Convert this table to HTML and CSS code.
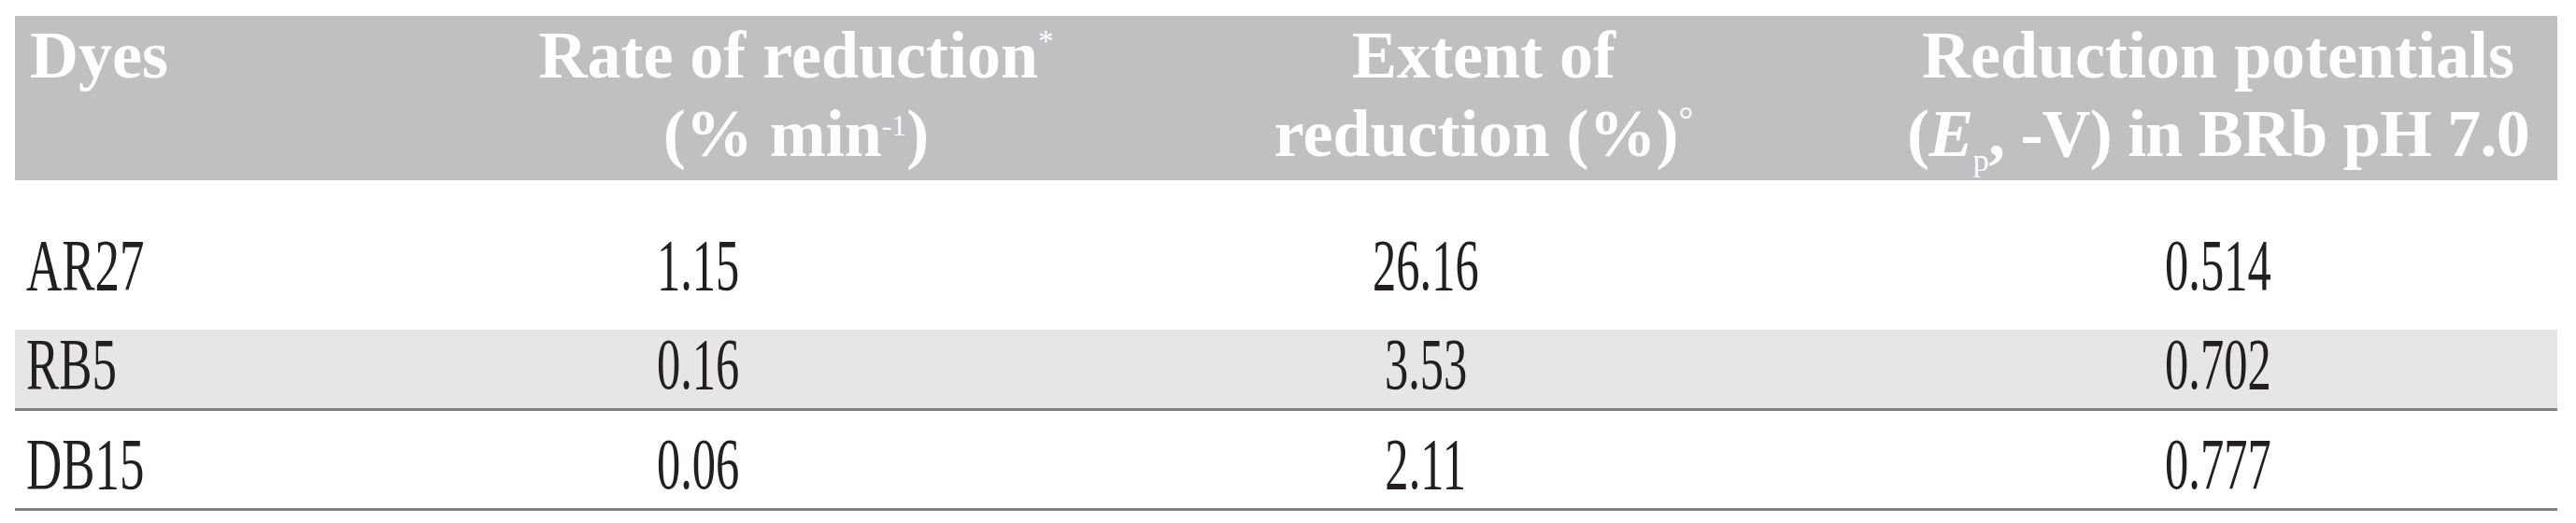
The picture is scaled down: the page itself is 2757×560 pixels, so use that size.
FILE: index.html
```html
<!DOCTYPE html>
<html lang="en">
<head>
<meta charset="utf-8">
<title>Dye reduction table</title>
<link rel="stylesheet" href="styles.css">
</head>
<body>
<div class="table">
  <div class="row head">
    <div class="cell c1">Dyes</div>
    <div class="cell c2">Rate of reduction<sup class="ast">*</sup><br>(% min<sup class="exp">-1</sup>)</div>
    <div class="cell c3">Extent of<br>reduction (%)<sup class="deg">°</sup></div>
    <div class="cell c4">Reduction potentials<br><span class="tight">(<i>E</i><sub class="sub">p</sub>, -V) in BRb pH 7.0</span></div>
  </div>
  <div class="row body first">
    <div class="cell c1"><span class="t left">AR27</span></div>
    <div class="cell c2"><span class="t num">1.15</span></div>
    <div class="cell c3"><span class="t num">26.16</span></div>
    <div class="cell c4"><span class="t num">0.514</span></div>
  </div>
  <div class="row body shade">
    <div class="cell c1"><span class="t left">RB5</span></div>
    <div class="cell c2"><span class="t num">0.16</span></div>
    <div class="cell c3"><span class="t num">3.53</span></div>
    <div class="cell c4"><span class="t num">0.702</span></div>
  </div>
  <div class="row body last">
    <div class="cell c1"><span class="t left">DB15</span></div>
    <div class="cell c2"><span class="t num">0.06</span></div>
    <div class="cell c3"><span class="t num">2.11</span></div>
    <div class="cell c4"><span class="t num">0.777</span></div>
  </div>
</div>
</body>
</html>
```

FILE: styles.css
```css
html, body {
  margin: 0;
  padding: 0;
  background: #ffffff;
}
body {
  font-family: "Liberation Serif", "Times New Roman", serif;
}
.table {
  width: 2721px;
  margin: 17px 0 0 16px;
}
.row {
  display: grid;
  grid-template-columns: 437px 588px 970px 726px;
}
.head {
  grid-template-columns: 552px 568px 904px 697px;
  background: #bfc0c2;
  color: #ffffff;
  font-weight: bold;
  font-size: 72px;
  line-height: 84px;
  padding-bottom: 8px;
  white-space: nowrap;
}
.head .cell {
  text-align: center;
}
.head .c1 {
  padding-left: 16px;
  text-align: left;
}
.head .c4 {
  padding-right: 29px;
}
.head sup, .head sub {
  line-height: 0;
  font-weight: normal;
}
.ast {
  font-size: 0.46em;
  vertical-align: 28px;
}
.exp {
  font-size: 0.44em;
  vertical-align: 22px;
}
.deg {
  font-size: 0.55em;
  vertical-align: 25px;
}
.sub {
  font-size: 0.48em;
  vertical-align: -16px;
}
.tight {
  letter-spacing: -0.8px;
}
.body {
  color: #231f20;
  font-size: 79px;
  line-height: 74px;
}
.body .cell {
  text-align: center;
}
.body .c1 {
  text-align: left;
  padding-left: 12px;
}
.t {
  display: inline-block;
  transform: scaleX(0.67);
  transform-origin: center;
}
.t.num {
  transform: scaleX(0.64);
}
.t.left {
  transform-origin: left;
}
.first {
  padding: 54px 0 32px;
}
.shade {
  background: #e6e6e6;
  padding: 0 0 10px;
  border-bottom: 3px solid #808080;
}
.last {
  padding: 20px 0 10px;
  border-bottom: 3px solid #808080;
}
```
